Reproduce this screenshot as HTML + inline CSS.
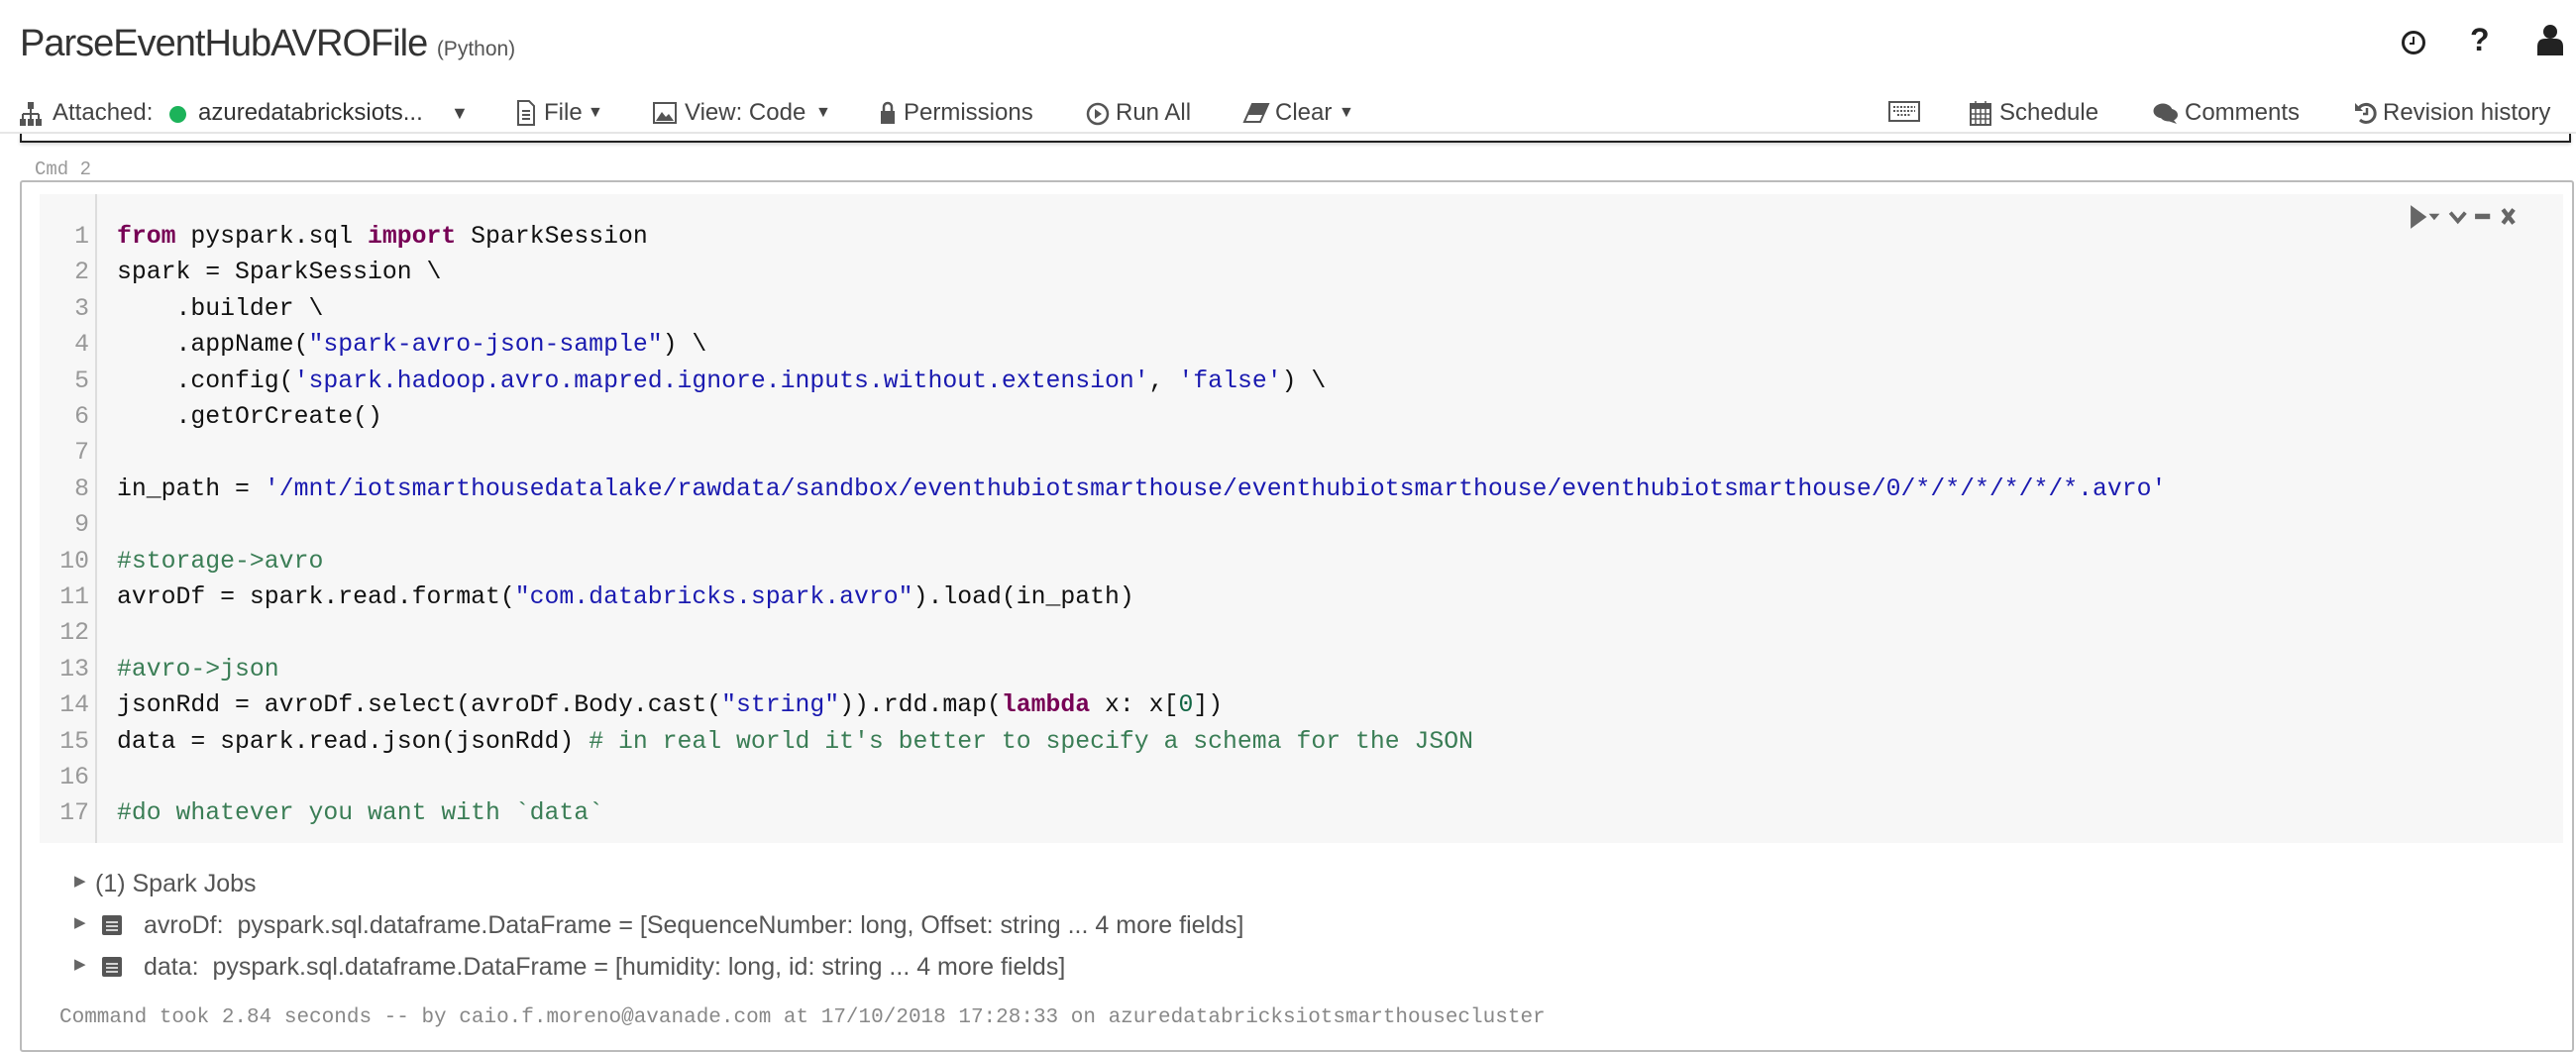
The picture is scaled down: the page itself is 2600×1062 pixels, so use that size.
<!DOCTYPE html>
<html><head><meta charset="utf-8"><style>
*{margin:0;padding:0;box-sizing:border-box}
body{width:2600px;height:1048px;background:#fff;position:relative;overflow:hidden;font-family:"Liberation Sans",sans-serif;color:#333}
.a{position:absolute;white-space:nowrap}
.tb{font-size:24px;color:#444;top:100px}
.code{position:absolute;left:40px;top:196px;width:2547px;height:655px;background:#f7f7f7}
.gut{position:absolute;left:96px;top:196px;width:2px;height:655px;background:#ddd}
.ln{position:absolute;left:40px;width:50px;text-align:right;font-family:"Liberation Mono",monospace;font-size:24.8px;color:#999}
.cl{position:absolute;left:118px;font-family:"Liberation Mono",monospace;font-size:24.8px;color:#111;white-space:pre}
.k{color:#770055;font-weight:bold}.s{color:#1a1ab0}.c{color:#3a7d55}.n{color:#116644}
.out{font-size:25px;color:#555}
</style></head><body>
<div class="a" style="left:20px;top:23px;font-size:38px;color:#333;letter-spacing:-1px">ParseEventHubAVROFile <span style="font-size:21px;color:#555;letter-spacing:0">(Python)</span></div>
<svg class="a" style="left:2423px;top:30px" width="26" height="26" viewBox="0 0 26 26"><circle cx="13" cy="13" r="10.5" fill="none" stroke="#222" stroke-width="3"/><path d="M13 7v7h-4" fill="none" stroke="#222" stroke-width="2"/></svg>
<div class="a" style="left:2493px;top:22px;font-size:32px;font-weight:bold;color:#222">?</div>
<svg class="a" style="left:2560px;top:24px" width="28" height="32" viewBox="0 0 28 32"><circle cx="14" cy="8" r="7" fill="#222"/><path d="M1 32v-9q0-8 8-8h10q8 0 8 8v9z" fill="#222"/></svg>
<svg class="a" style="left:20px;top:103px" width="22" height="24" viewBox="0 0 22 24"><rect x="8" y="0" width="6" height="7" fill="#555"/><path d="M11 7v5M3 12h16M3 12v5M11 12v5M19 12v5" stroke="#555" stroke-width="2" fill="none"/><rect x="0" y="17" width="6" height="7" fill="#555"/><rect x="8" y="17" width="6" height="7" fill="#555"/><rect x="16" y="17" width="6" height="7" fill="#555"/></svg>
<div class="a tb" style="left:53px">Attached:</div>
<div class="a" style="left:171px;top:107px;width:17px;height:17px;border-radius:50%;background:#1cb35a"></div>
<div class="a tb" style="left:200px;color:#333">azuredatabricksiots...</div>
<div class="a tb" style="left:455px;font-size:18px;top:104px">▼</div>
<svg class="a" style="left:522px;top:101px" width="18" height="26" viewBox="0 0 18 26"><path d="M1 1h11l5 5v19H1z" fill="none" stroke="#555" stroke-width="2"/><path d="M5 11h8M5 15h8M5 19h8" stroke="#555" stroke-width="2"/></svg>
<div class="a tb" style="left:549px">File</div><div class="a tb" style="left:593px;font-size:16px;top:105px">▼</div>
<svg class="a" style="left:659px;top:103px" width="24" height="22" viewBox="0 0 24 22"><rect x="1" y="1" width="22" height="20" fill="none" stroke="#555" stroke-width="2"/><path d="M3 19l6-9 4 5 3-3 5 7z" fill="#555"/></svg>
<div class="a tb" style="left:691px">View: Code</div><div class="a tb" style="left:823px;font-size:16px;top:105px">▼</div>
<svg class="a" style="left:888px;top:101px" width="16" height="24" viewBox="0 0 16 24"><path d="M4 11V7a4 4 0 0 1 8 0v4" fill="none" stroke="#555" stroke-width="2.5"/><rect x="1" y="11" width="14" height="13" fill="#555"/></svg>
<div class="a tb" style="left:912px">Permissions</div>
<svg class="a" style="left:1096px;top:103px" width="24" height="24" viewBox="0 0 24 24"><circle cx="12" cy="12" r="10" fill="none" stroke="#555" stroke-width="2.5"/><path d="M9 7l7 5-7 5z" fill="#555"/></svg>
<div class="a tb" style="left:1126px">Run All</div>
<svg class="a" style="left:1254px;top:103px" width="28" height="22" viewBox="0 0 28 22"><path d="M10 2h16L18 20H2z" fill="none" stroke="#555" stroke-width="2"/><path d="M10 2h16l-5 11H5z" fill="#555"/></svg>
<div class="a tb" style="left:1287px">Clear</div><div class="a tb" style="left:1351px;font-size:16px;top:105px">▼</div>
<svg class="a" style="left:1906px;top:102px" width="32" height="21" viewBox="0 0 32 21"><rect x="1" y="1" width="30" height="19" fill="none" stroke="#555" stroke-width="2"/><path d="M5 6h22M5 10h22M9 14h14" stroke="#555" stroke-width="2" stroke-dasharray="2 1.5"/></svg>
<svg class="a" style="left:1988px;top:101px" width="22" height="26" viewBox="0 0 22 26"><rect x="1" y="4" width="20" height="21" fill="none" stroke="#555" stroke-width="2"/><rect x="1" y="4" width="20" height="5" fill="#555"/><path d="M6 1v6M16 1v6M1 14h20M1 19h20M6 9v16M11 9v16M16 9v16" stroke="#555" stroke-width="1.5"/></svg>
<div class="a tb" style="left:2018px">Schedule</div>
<svg class="a" style="left:2173px;top:103px" width="26" height="22" viewBox="0 0 26 22"><ellipse cx="10" cy="9" rx="9.5" ry="7.5" fill="#555"/><ellipse cx="16" cy="13" rx="9" ry="6.5" fill="#555"/><path d="M20 17l4 5-9-3z" fill="#555"/></svg>
<div class="a tb" style="left:2205px">Comments</div>
<svg class="a" style="left:2376px;top:102px" width="24" height="24" viewBox="0 0 24 24"><path d="M5 7A9 9 0 1 1 6 19" fill="none" stroke="#555" stroke-width="3"/><path d="M1 2v8h8z" fill="#555"/><path d="M13 7v6h-4" fill="none" stroke="#555" stroke-width="2.5"/></svg>
<div class="a tb" style="left:2405px">Revision history</div>
<div class="a" style="left:0;top:133px;width:2600px;height:2px;background:#e6e6e6"></div>
<div class="a" style="left:20px;top:135px;width:2575px;height:9px;border:2px solid #222;border-top:none;box-shadow:0 2px 3px rgba(0,0,0,.15)"></div>
<div class="a" style="left:35px;top:160px;font-family:'Liberation Mono',monospace;font-size:19px;color:#999">Cmd 2</div>
<div class="a" style="left:20px;top:182px;width:2578px;height:880px;border:2px solid #bbb;border-radius:3px"></div>
<div class="code"></div><div class="gut"></div>
<svg class="a" style="left:2422px;top:206px" width="150" height="26" viewBox="0 0 120 24"><path d="M1 1l15 11-15 11z" fill="#666"/><path d="M18 9h10l-5 6z" fill="#666"/><path d="M38 8l7 8 7-8" fill="none" stroke="#666" stroke-width="3.5"/><rect x="61" y="9" width="14" height="5" fill="#666"/><path d="M87 5l10 13M97 5L87 18" stroke="#666" stroke-width="4"/></svg>
<div class="ln" style="top:225px">1</div><div class="ln" style="top:261px">2</div><div class="ln" style="top:298px">3</div><div class="ln" style="top:334px">4</div><div class="ln" style="top:371px">5</div><div class="ln" style="top:407px">6</div><div class="ln" style="top:443px">7</div><div class="ln" style="top:480px">8</div><div class="ln" style="top:516px">9</div><div class="ln" style="top:553px">10</div><div class="ln" style="top:589px">11</div><div class="ln" style="top:625px">12</div><div class="ln" style="top:662px">13</div><div class="ln" style="top:698px">14</div><div class="ln" style="top:735px">15</div><div class="ln" style="top:771px">16</div><div class="ln" style="top:807px">17</div>
<div class="cl" style="top:225px"><span class="k">from</span> pyspark.sql <span class="k">import</span> SparkSession</div>
<div class="cl" style="top:261px">spark = SparkSession \</div>
<div class="cl" style="top:298px">    .builder \</div>
<div class="cl" style="top:334px">    .appName(<span class="s">"spark-avro-json-sample"</span>) \</div>
<div class="cl" style="top:371px">    .config(<span class="s">'spark.hadoop.avro.mapred.ignore.inputs.without.extension'</span>, <span class="s">'false'</span>) \</div>
<div class="cl" style="top:407px">    .getOrCreate()</div>
<div class="cl" style="top:480px">in_path = <span class="s">'/mnt/iotsmarthousedatalake/rawdata/sandbox/eventhubiotsmarthouse/eventhubiotsmarthouse/eventhubiotsmarthouse/0/*/*/*/*/*/*.avro'</span></div>
<div class="cl" style="top:553px"><span class="c">#storage-&gt;avro</span></div>
<div class="cl" style="top:589px">avroDf = spark.read.format(<span class="s">"com.databricks.spark.avro"</span>).load(in_path)</div>
<div class="cl" style="top:662px"><span class="c">#avro-&gt;json</span></div>
<div class="cl" style="top:698px">jsonRdd = avroDf.select(avroDf.Body.cast(<span class="s">"string"</span>)).rdd.map(<span class="k">lambda</span> x: x[<span class="n">0</span>])</div>
<div class="cl" style="top:735px">data = spark.read.json(jsonRdd) <span class="c"># in real world it's better to specify a schema for the JSON</span></div>
<div class="cl" style="top:807px"><span class="c">#do whatever you want with `data`</span></div>
<div class="a out" style="left:75px;top:880px;font-size:15px;color:#666">▶</div>
<div class="a out" style="left:96px;top:878px">(1) Spark Jobs</div>
<div class="a out" style="left:75px;top:922px;font-size:15px;color:#666">▶</div>
<svg class="a" style="left:103px;top:924px" width="20" height="20" viewBox="0 0 20 20"><rect x="0" y="0" width="20" height="20" rx="2" fill="#555"/><path d="M4 7h12M4 11h12M4 15h12" stroke="#fff" stroke-width="1.5"/></svg>
<div class="a out" style="left:145px;top:920px">avroDf:&nbsp; pyspark.sql.dataframe.DataFrame = [SequenceNumber: long, Offset: string ... 4 more fields]</div>
<div class="a out" style="left:75px;top:964px;font-size:15px;color:#666">▶</div>
<svg class="a" style="left:103px;top:966px" width="20" height="20" viewBox="0 0 20 20"><rect x="0" y="0" width="20" height="20" rx="2" fill="#555"/><path d="M4 7h12M4 11h12M4 15h12" stroke="#fff" stroke-width="1.5"/></svg>
<div class="a out" style="left:145px;top:962px">data:&nbsp; pyspark.sql.dataframe.DataFrame = [humidity: long, id: string ... 4 more fields]</div>
<div class="a" style="left:60px;top:1016px;font-family:'Liberation Mono',monospace;font-size:21px;color:#888">Command took 2.84 seconds -- by caio.f.moreno@avanade.com at 17/10/2018 17:28:33 on azuredatabricksiotsmarthousecluster</div>
</body></html>
